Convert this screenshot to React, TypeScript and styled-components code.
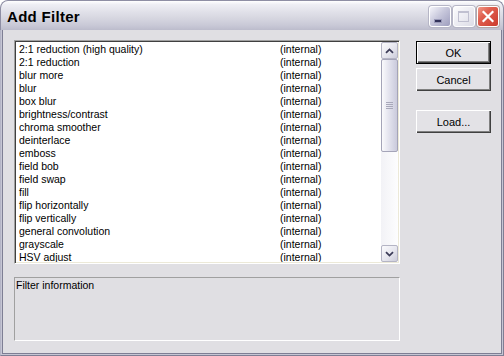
import styled, { createGlobalStyle } from 'styled-components';

const GlobalStyle = createGlobalStyle`
  html, body {
    margin: 0;
    padding: 0;
    background: #ffffff;
  }
  body {
    font-family: "Liberation Sans", Arial, sans-serif;
  }
`;

const filters: string[] = [
  '2:1 reduction (high quality)',
  '2:1 reduction',
  'blur more',
  'blur',
  'box blur',
  'brightness/contrast',
  'chroma smoother',
  'deinterlace',
  'emboss',
  'field bob',
  'field swap',
  'fill',
  'flip horizontally',
  'flip vertically',
  'general convolution',
  'grayscale',
  'HSV adjust',
];

const Chevron = ({ down }: { down?: boolean }) => (
  <svg width="9" height="6" viewBox="0 0 9 6">
    <polyline
      points={down ? '1,1.2 4.5,4.6 8,1.2' : '1,4.8 4.5,1.4 8,4.8'}
      fill="none"
      stroke="#3c3c58"
      strokeWidth="1.8"
    />
  </svg>
);

export default function App() {
  return (
    <>
      <GlobalStyle />
      <Window>
        <TitleBar>
          <Title>Add Filter</Title>
          <CaptionButtons>
            <CaptionButton $variant="min">
              <svg width="20" height="19" viewBox="0 0 20 19">
                <rect x="4.5" y="12.5" width="7" height="3" fill="#32325a" stroke="#9a9ab8" strokeWidth="1" />
              </svg>
            </CaptionButton>
            <CaptionButton $variant="max">
              <svg width="20" height="19" viewBox="0 0 20 19">
                <rect x="4.5" y="4.5" width="10" height="10" fill="none" stroke="#c0c0d0" strokeWidth="1" />
                <rect x="4" y="4" width="11" height="2" fill="#c0c0d0" />
              </svg>
            </CaptionButton>
            <CaptionButton $variant="close">
              <svg width="20" height="19" viewBox="0 0 20 19">
                <path d="M5.5 5 L14.5 14 M14.5 5 L5.5 14" stroke="#ffffff" strokeWidth="2.2" strokeLinecap="square" />
              </svg>
            </CaptionButton>
          </CaptionButtons>
        </TitleBar>
        <Frame>
          <Client>
            <LeftColumn>
              <ListBox>
                <Rows>
                  {filters.map((name) => (
                    <Row key={name}>
                      <span>{name}</span>
                      <span>(internal)</span>
                    </Row>
                  ))}
                </Rows>
                <ScrollBar>
                  <ScrollButton>
                    <Chevron />
                  </ScrollButton>
                  <Thumb>
                    <Grip>
                      <i />
                      <i />
                      <i />
                      <i />
                    </Grip>
                  </Thumb>
                  <Track />
                  <ScrollButton>
                    <Chevron down />
                  </ScrollButton>
                </ScrollBar>
              </ListBox>
              <InfoBox>Filter information</InfoBox>
            </LeftColumn>
            <ButtonColumn>
              <PushButton $isDefault>OK</PushButton>
              <PushButton $space={4}>Cancel</PushButton>
              <PushButton $space={19}>Load...</PushButton>
            </ButtonColumn>
          </Client>
        </Frame>
      </Window>
    </>
  );
}

const Window = styled.div`
  width: 504px;
  height: 356px;
  box-sizing: border-box;
  display: flex;
  flex-direction: column;
  border-radius: 8px 8px 0 0;
  overflow: hidden;
  background: #bdbdcd;
`;

const TitleBar = styled.div`
  height: 30px;
  flex: none;
  box-sizing: border-box;
  display: flex;
  align-items: center;
  justify-content: space-between;
  padding: 0 4px 0 6px;
  border: 1px solid #8e8ea4;
  border-bottom: none;
  border-radius: 8px 8px 0 0;
  background: linear-gradient(
    to bottom,
    #ffffff 0%,
    #eeeef4 12%,
    #e2e2ea 35%,
    #d6d6e0 60%,
    #c8c8d6 85%,
    #bcbccc 100%
  );
`;

const Title = styled.div`
  font-family: "Liberation Sans", Arial, sans-serif;
  font-weight: bold;
  font-size: 15px;
  letter-spacing: 0.3px;
  color: #000000;
  margin-top: 1px;
`;

const CaptionButtons = styled.div`
  display: flex;
  gap: 2px;
  margin-top: 2px;
`;

const CaptionButton = styled.div<{ $variant: 'min' | 'max' | 'close' }>`
  width: 22px;
  height: 21px;
  box-sizing: border-box;
  border-radius: 3px;
  border: 1px solid #ffffff;
  display: flex;
  align-items: center;
  justify-content: center;
  background: ${({ $variant }) =>
    $variant === 'close'
      ? 'linear-gradient(135deg, #f29a8a 0%, #e06050 35%, #cc3a2c 100%)'
      : $variant === 'min'
      ? 'linear-gradient(135deg, #f4f4fa 0%, #c8c8dc 45%, #9e9ebe 100%)'
      : 'linear-gradient(135deg, #fcfcfd 0%, #ececf2 50%, #dcdce6 100%)'};
  box-shadow: ${({ $variant }) =>
    $variant === 'close' ? '0 0 0 1px #b3a6a6' : '0 0 0 1px #b6b6c6'};
`;

const Frame = styled.div`
  flex: 1;
  display: flex;
  padding: 0 1px 1px 1px;
  border-left: 1px solid #b4b4c6;
  border-right: 1px solid #7e7e94;
  border-bottom: 1px solid #7e7e94;
  background: #c6c6d4;
`;

const Client = styled.div`
  flex: 1;
  display: flex;
  gap: 16px;
  padding: 10px 0 0 11px;
  background: #e0dfe3;
  border: 1px solid #7e7e94;
  border-top: none;
`;

const LeftColumn = styled.div`
  width: 386px;
  display: flex;
  flex-direction: column;
  gap: 13px;
`;

const ListBox = styled.div`
  height: 224px;
  box-sizing: border-box;
  display: flex;
  border: 1px solid;
  border-color: #a0a0a0 #ffffff #ffffff #a0a0a0;
  box-shadow: inset 1px 1px 0 #404040, inset -1px -1px 0 #ece9d8;
  padding: 1px;
`;

const Rows = styled.div`
  flex: 1;
  overflow: hidden;
  padding-top: 1px;
  background: #ffffff;
`;

const Row = styled.div`
  display: grid;
  grid-template-columns: 261px 1fr;
  height: 13px;
  line-height: 13px;
  padding-left: 3px;
  font-size: 10.5px;
  color: #000000;
  white-space: nowrap;
`;

const ScrollBar = styled.div`
  width: 17px;
  display: flex;
  flex-direction: column;
  background: linear-gradient(to right, #f2f2f6, #fdfdfe);
`;

const ScrollButton = styled.div`
  height: 17px;
  box-sizing: border-box;
  flex: none;
  display: flex;
  align-items: center;
  justify-content: center;
  border: 1px solid #b4b4c4;
  border-radius: 2px;
  background: linear-gradient(to bottom right, #fbfbfd 0%, #e6e6ee 55%, #ccccda 100%);
`;

const Thumb = styled.div`
  height: 93px;
  flex: none;
  box-sizing: border-box;
  display: flex;
  align-items: center;
  justify-content: center;
  border: 1px solid #a4a4b8;
  border-radius: 2px;
  background: linear-gradient(to right, #fafafc 0%, #e6e6f0 40%, #cacadc 100%);
`;

const Grip = styled.div`
  display: flex;
  flex-direction: column;
  gap: 1px;

  i {
    display: block;
    width: 7px;
    height: 1px;
    background: #a8a8ba;
  }
`;

const Track = styled.div`
  flex: 1;
`;

const InfoBox = styled.div`
  height: 64px;
  box-sizing: border-box;
  padding: 1px 1px;
  border: 1px solid;
  border-color: #a0a0a0 #ffffff #ffffff #a0a0a0;
  font-size: 10.5px;
  line-height: 13px;
  color: #000000;
`;

const ButtonColumn = styled.div`
  width: 75px;
  display: flex;
  flex-direction: column;
  padding-top: 1px;
`;

const PushButton = styled.div<{ $isDefault?: boolean; $space?: number }>`
  width: 75px;
  height: 23px;
  box-sizing: border-box;
  margin-top: ${({ $space }) => $space ?? 0}px;
  display: flex;
  align-items: center;
  justify-content: center;
  font-size: 11px;
  color: #000000;
  background: #e3e2e6;
  border: ${({ $isDefault }) => ($isDefault ? '1px solid #000000' : 'none')};
  box-shadow: inset 1px 1px 0 #ffffff, inset -1px -1px 0 #404040, inset -2px -2px 0 #808080;
`;
